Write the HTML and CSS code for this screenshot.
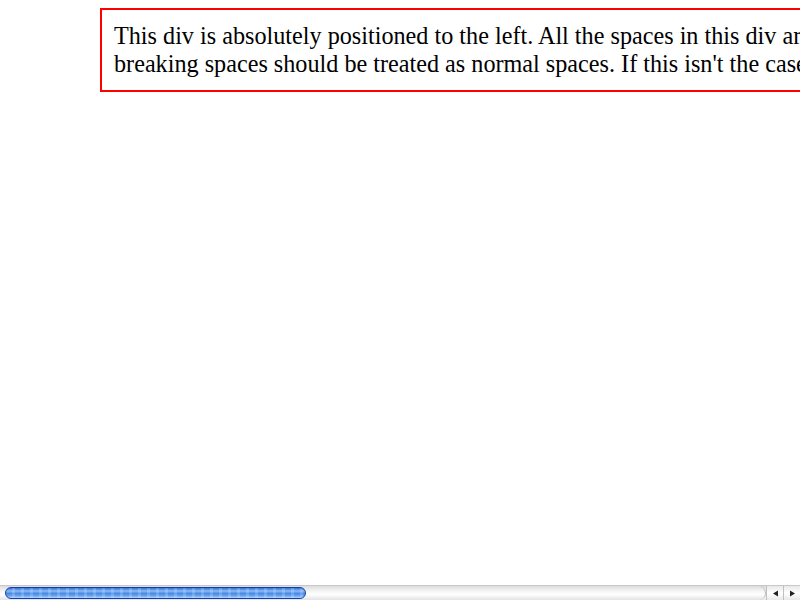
FILE: index.html
```html
<!DOCTYPE html>
<html>
<head>
<meta charset="utf-8">
<link rel="stylesheet" href="styles.css">
</head>
<body>
<div class="viewport">
  <div class="box">This div is absolutely positioned to the left. All the spaces in this div are non-breaking spaces, and these non-<br>breaking spaces should be treated as normal spaces. If this isn't the case, this text will be on a single line.</div>
</div>
<div class="hscroll">
  <div class="track">
    <div class="thumb"></div>
  </div>
  <div class="btn"><svg width="7" height="7" viewBox="0 0 7 7"><path d="M1 3.5 L6 0.5 L6 6.5 Z" fill="#222"/></svg></div>
  <div class="btn"><svg width="7" height="7" viewBox="0 0 7 7"><path d="M6 3.5 L1 0.5 L1 6.5 Z" fill="#222"/></svg></div>
</div>
</body>
</html>
```
FILE: styles.css
```css
html, body {
  margin: 0;
  height: 100%;
  overflow: hidden;
  background: #fff;
}
body {
  display: flex;
  flex-direction: column;
}
.viewport {
  flex: 1;
  overflow: hidden;
  padding: 8px 0 0 100px;
}
.box {
  display: inline-block;
  white-space: nowrap;
  border: 2px solid #f00;
  padding: 12px;
  font-family: "Liberation Serif", "Times New Roman", serif;
  font-size: 24.2px;
  line-height: 28px;
  color: #000;
}
.hscroll {
  height: 15px;
  display: flex;
  background: linear-gradient(#d8d8d8, #f4f4f4 30%, #fff 55%, #eaeaea);
  border-top: 1px solid #c8c8c8;
  box-sizing: border-box;
}
.track {
  flex: 1;
  border-right: 1px solid #bbb;
  border-radius: 0 7px 7px 0;
  background: linear-gradient(#dcdcdc, #f4f4f4 35%, #fff 60%, #e4e4e4);
}
.thumb {
  margin: 1px 0 0 5px;
  width: 301px;
  height: 12px;
  box-sizing: border-box;
  border: 1px solid #1240a8;
  border-radius: 6px;
  background:
    repeating-linear-gradient(90deg, rgba(255,255,255,0) 0 6px, rgba(255,255,255,0.18) 6px 9px),
    linear-gradient(#2f6fd8, #8abcf2 30%, #4a8ae6 55%, #6aa8f2 80%, #b4d6fb);
}
.btn {
  width: 17px;
  display: flex;
  align-items: center;
  justify-content: center;
  border-left: 1px solid #c0c0c0;
  box-sizing: border-box;
  background: linear-gradient(#e8e8e8, #fff 50%, #e8e8e8);
}
```
